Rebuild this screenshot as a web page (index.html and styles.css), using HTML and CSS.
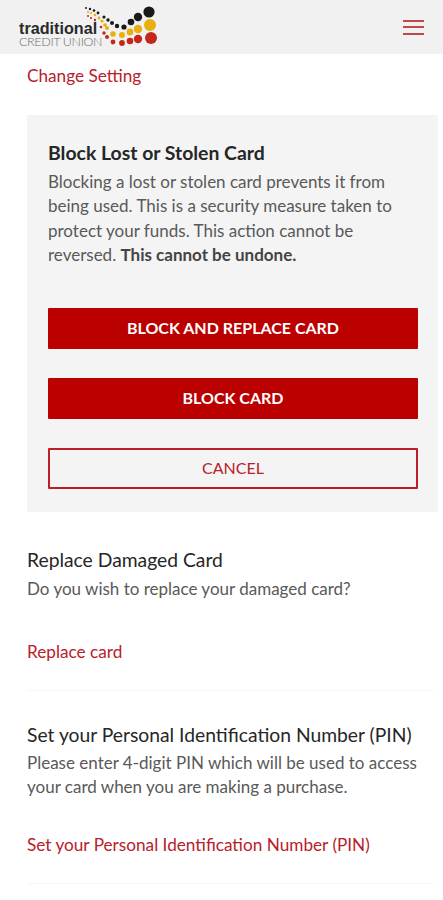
FILE: index.html
```html
<!DOCTYPE html>
<html lang="en">
<head>
    <meta charset="UTF-8">
    <meta name="viewport" content="width=device-width, initial-scale=1.0">
    <title>Card Settings</title>
    <link rel="stylesheet" href="styles.css">
</head>
<body>
    <header class="topbar">
        <div class="logo">
            <div class="logo-text">
                <span class="logo-name">traditional</span>
                <span class="logo-sub">CREDIT UNION</span>
            </div>
            <svg class="logo-dots" width="78" height="46" viewBox="82 4 78 46">
                <g fill="#1a1a1a">
                    <circle cx="86" cy="8" r="1"/><circle cx="90" cy="9" r="1.2"/><circle cx="94" cy="10.5" r="1.3"/>
                    <circle cx="98" cy="13" r="1.4"/><circle cx="104" cy="17" r="1.6"/><circle cx="108" cy="20" r="1.7"/>
                    <circle cx="112" cy="23" r="2"/><circle cx="117" cy="26" r="2.2"/><circle cx="124" cy="27" r="2.6"/>
                    <circle cx="131" cy="22" r="3.3"/><circle cx="138" cy="17" r="4.2"/><circle cx="149" cy="12" r="5.6"/>
                </g>
                <g fill="#e8b00e">
                    <circle cx="88" cy="12" r="1"/><circle cx="91" cy="13" r="1.1"/><circle cx="95" cy="15" r="1.3"/>
                    <circle cx="99" cy="18" r="1.4"/><circle cx="102" cy="21" r="1.6"/><circle cx="105" cy="25" r="1.8"/>
                    <circle cx="107" cy="28" r="2"/><circle cx="113" cy="34" r="2.8"/><circle cx="122" cy="35" r="3"/>
                    <circle cx="130" cy="32" r="3.4"/><circle cx="138" cy="29" r="4.2"/><circle cx="150" cy="25" r="6"/>
                </g>
                <g fill="#c4281c">
                    <circle cx="88" cy="16" r="1"/><circle cx="91" cy="18" r="1.1"/><circle cx="95" cy="20" r="1.2"/>
                    <circle cx="101" cy="27" r="1.3"/><circle cx="104" cy="33" r="1.7"/><circle cx="107" cy="37" r="2"/>
                    <circle cx="113" cy="42" r="2.4"/><circle cx="122" cy="43" r="2.9"/><circle cx="130" cy="41" r="3.3"/>
                    <circle cx="138" cy="39" r="4.2"/><circle cx="151" cy="38" r="6"/>
                </g>
            </svg>
        </div>
        <div class="menu-icon">
            <span></span>
            <span></span>
            <span></span>
        </div>
    </header>

    <main class="content">
        <a class="link top-link" href="#">Change Setting</a>

        <section class="block-panel">
            <h2>Block Lost or Stolen Card</h2>
            <p>Blocking a lost or stolen card prevents it from being used. This is a security measure taken to protect your funds. This action cannot be reversed. <strong>This cannot be undone.</strong></p>
            <div class="actions">
                <button class="btn btn-solid">BLOCK AND REPLACE CARD</button>
                <button class="btn btn-solid">BLOCK CARD</button>
                <button class="btn btn-outline">CANCEL</button>
            </div>
        </section>

        <section class="option option-replace">
            <h2>Replace Damaged Card</h2>
            <p>Do you wish to replace your damaged card?</p>
            <a class="link" href="#">Replace card</a>
        </section>

        <section class="option option-pin">
            <h2>Set your Personal Identification Number (PIN)</h2>
            <p>Please enter 4-digit PIN which will be used to access your card when you are making a purchase.</p>
            <a class="link" href="#">Set your Personal Identification Number (PIN)</a>
        </section>
    </main>
</body>
</html>
```

FILE: styles.css
```css
body {
    margin: 0;
    background: #fff;
    color: #595959;
    font-family: Lato, "Open Sans", sans-serif;
    font-size: 17px;
    line-height: 24.5px;
    overflow: hidden;
}

.topbar {
    height: 54px;
    background: #f1f1f1;
    display: flex;
    align-items: center;
    justify-content: space-between;
    padding: 0 19px;
}

.logo {
    display: flex;
    height: 54px;
}

.logo-text {
    display: flex;
    flex-direction: column;
    padding-top: 20px;
    width: 81px;
}

.logo-name {
    font-family: "Liberation Sans", sans-serif;
    font-weight: bold;
    font-size: 16.2px;
    line-height: 16px;
    color: #2a2a2a;
}

.logo-sub {
    font-family: Lato, sans-serif;
    font-weight: 300;
    font-size: 12.5px;
    line-height: 11px;
    color: #6e6e6e;
    letter-spacing: -0.35px;
    white-space: nowrap;
}

.logo-dots {
    margin: 4px 0 0 -18px;
}

.menu-icon {
    display: flex;
    flex-direction: column;
    gap: 4.5px;
    width: 21px;
}

.menu-icon span {
    height: 2px;
    background: #c0474a;
}

.content {
    padding: 0 5px 0 27px;
}

.link {
    color: #b8202a;
    font-size: 17.2px;
    text-decoration: none;
    display: block;
}

.top-link {
    padding-top: 10px;
}

.block-panel {
    background: #f4f4f4;
    margin-top: 26px;
    padding: 26px 20px 22px 21px;
    height: 397px;
    box-sizing: border-box;
}

h2 {
    margin: 0;
    font-size: 19.3px;
    font-weight: normal;
    line-height: 24px;
    color: #262626;
}

.block-panel h2 {
    font-weight: bold;
    font-size: 19.4px;
    margin-bottom: 5px;
}

.block-panel p,
.option p {
    margin: 0;
}

.block-panel strong {
    color: #444;
}

.actions {
    display: flex;
    flex-direction: column;
    gap: 29px;
    margin-top: 40px;
}

.btn {
    height: 41px;
    padding: 0 0 2px;
    font-family: Lato, sans-serif;
    font-size: 16px;
    border-radius: 1px;
    box-sizing: border-box;
}

.btn-solid {
    background: #bb0000;
    border: 0;
    color: #fff;
    font-weight: bold;
}

.btn-outline {
    background: #f4f4f4;
    border: 2px solid #b8202a;
    color: #b8202a;
}

.option {
    border-bottom: 1px solid #f6f6f6;
    margin-right: 4px;
}

.option p {
    margin-top: 4px;
}

.option-replace {
    margin-top: 36px;
    margin-bottom: 32px;
    padding-bottom: 25px;
}

.option-replace p {
    margin-top: 5px;
}

.option-replace .link {
    margin-top: 39px;
}

.option-pin {
    padding-bottom: 26px;
}

.option-pin .link {
    margin-top: 33px;
}
```
